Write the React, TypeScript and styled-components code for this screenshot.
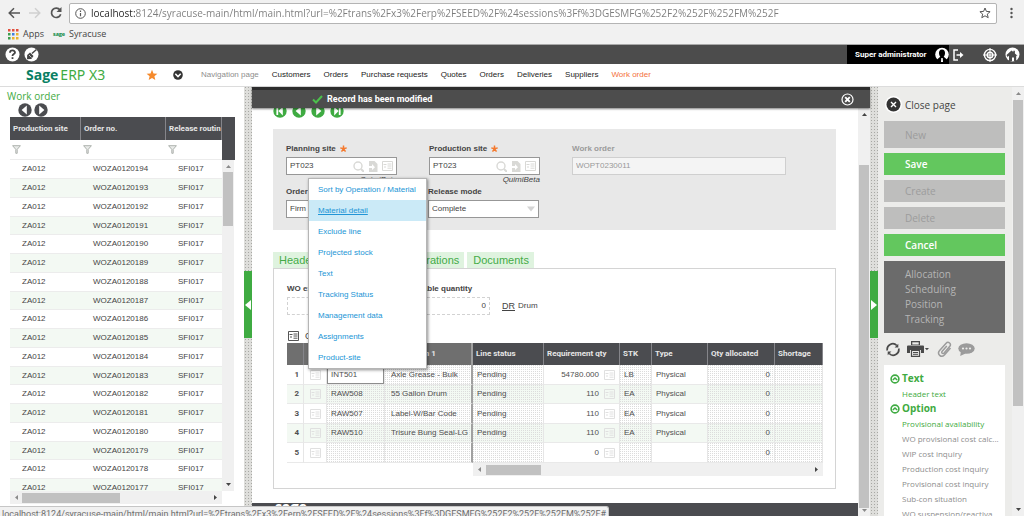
import React from 'react';
import styled, { createGlobalStyle, css } from 'styled-components';

const arial = '"Liberation Sans", Arial, sans-serif';
const segoe = '"Open Sans", "Noto Sans", sans-serif';
const green = '#3fab42';
const slate = '#4b4c50';

const Global = createGlobalStyle`
  *, *::before, *::after { box-sizing: border-box; }
  body { margin: 0; background: #fff; font: 8px/12px ${arial}; color: #444; }
  button, input, select { font: inherit; color: inherit; margin: 0; padding: 0; border: 0; background: none; border-radius: 0; }
  a { color: inherit; text-decoration: none; }
  svg { display: block; flex: none; }
  table { border-collapse: separate; border-spacing: 0; table-layout: fixed; width: 100%; }
  th, td { padding: 0; text-align: left; font-weight: normal; white-space: nowrap; overflow: hidden; }
`;

const Page = styled.div`
  position: relative;
  display: flex;
  flex-direction: column;
  height: 100vh;
  overflow: hidden;
`;

/* ---------- browser chrome ---------- */

const Browser = styled.header`
  flex: none;
  height: 45px;
  background: #f1f1f1;
  border-bottom: 1px solid #a9a9a9;
  font-family: ${segoe};
`;

const Toolbar = styled.div`
  display: flex;
  align-items: center;
  height: 24px;
  padding: 2px 8px 0;
`;

const ToolButton = styled.button`
  width: 12px;
  height: 12px;
  margin-right: 9px;
`;

const Address = styled.label`
  display: flex;
  flex: 1;
  align-items: center;
  height: 21px;
  margin: 0 11px 0 -2px;
  padding: 0 5px;
  background: #fff;
  border: 1px solid #b4b4b4;
  border-radius: 2px;
`;

const AddressInput = styled.input`
  flex: 1;
  min-width: 0;
  margin-left: 5px;
  font-size: 10px;
  line-height: 16px;
  outline: 0;
  background: linear-gradient(90deg, #222 44px, #7c7c7c 44px);
  background-clip: text;
  -webkit-background-clip: text;
  -webkit-text-fill-color: transparent;
`;

const Bookmarks = styled.nav`
  display: flex;
  align-items: center;
  height: 20px;
  padding-left: 8px;
  font-size: 9px;
  a { display: flex; align-items: center; gap: 4px; margin-right: 9px; }
`;

const MiniSage = styled.b`
  font: 900 6px/8px Lato, sans-serif;
  color: #0b8a45;
`;

const StatusBubble = styled.div`
  position: absolute;
  left: 0;
  bottom: 0;
  height: 10px;
  overflow: hidden;
  padding: 0 2px;
  background: #f1f1f1;
  border: 1px solid #c6c6c6;
  border-left: 0;
  border-bottom: 0;
  border-top-right-radius: 3px;
  font: 9px/14px Roboto, sans-serif;
  color: #6d6d6d;
  white-space: nowrap;
`;

/* ---------- application header ---------- */

const TopBar = styled.div`
  display: flex;
  flex: none;
  align-items: center;
  height: 19px;
  padding: 0 4px 0 5px;
  background: #4c4c4c;
  gap: 4px;
`;

const User = styled.div`
  display: flex;
  align-items: center;
  justify-content: space-between;
  width: 102px;
  height: 19px;
  margin-left: auto;
  padding-left: 8px;
  background: #000;
  color: #fff;
  font: bold 8px/12px Roboto, sans-serif;
`;

const TopIcons = styled.div`
  display: flex;
  align-items: center;
  gap: 8px;
  button:first-child { margin-right: 11px; }
`;

const NavBar = styled.nav`
  display: flex;
  flex: none;
  align-items: center;
  height: 23px;
  padding-left: 26px;
  border-bottom: 1px solid #dcdcdc;
`;

const Brand = styled.div`
  display: flex;
  align-items: baseline;
  gap: 2px;
  width: 120px;
  font: 14px/20px ${segoe};
  color: ${green};
  white-space: nowrap;
  b { color: #0a7f63; }
  span { font-family: "Noto Sans", sans-serif; }
`;

const NavIcons = styled.div`
  display: flex;
  align-items: center;
  gap: 15px;
  width: 55px;
`;

const NavLink = styled.a<{ $tone?: string }>`
  margin-right: 13px;
  color: ${p => p.$tone || '#222'};
`;

/* ---------- workspace ---------- */

const Workspace = styled.div`
  display: flex;
  flex: 1;
  min-height: 0;
`;

const Splitter = styled.div`
  display: flex;
  flex-direction: column;
  width: 8px;
  padding-top: 184px;
  background: conic-gradient(at 1px 1px, transparent 75%, #a8a8a4 0) 1px 0 / 3px 3px #dededb;
`;

const Handle = styled.button`
  display: flex;
  align-items: center;
  justify-content: center;
  height: 67px;
  background: ${green};
`;

const LeftPanel = styled.aside`
  display: flex;
  flex-direction: column;
  width: 244px;
  padding: 2px 9px 12px 7px;
`;

const PanelTitle = styled.h1`
  margin: 0;
  font: 10px/14px ${segoe};
  color: ${green};
`;

const Arrows = styled.div<{ $gap: number; $left: number }>`
  display: flex;
  height: 14px;
  gap: ${p => p.$gap}px;
  padding-left: ${p => p.$left}px;
`;

const OrderGrid = styled.div`
  display: grid;
  grid-template: 43px 1fr 13px / 1fr 13px;
  flex: 1;
  min-height: 0;
  margin-left: 3px;
`;

const Clip = styled.div`
  grid-row: span 2;
  min-height: 0;
  overflow: hidden;
`;

const headCell = css`
  font: bold 8px/12px Roboto, sans-serif;
  color: #e6e6e6;
  background: ${slate};
  border-right: 1px solid #85858a;
`;

const OrderTable = styled.table`
  th { ${headCell} height: 23px; padding-left: 3px; }
  thead td { height: 20px; padding-left: 2px; border-bottom: 1px solid #ececec; }
  tbody td { height: 19px; padding-left: 12px; border-bottom: 1px solid #ececec; }
  tbody tr:nth-child(4n) td { height: 18px; }
  tbody tr:nth-child(even) td { background: #f3f9f3; }
`;

const DarkCorner = styled.div`
  background: ${slate};
`;

const Bar = styled.div<{ $horizontal?: boolean; $top?: number }>`
  display: flex;
  flex: none;
  flex-direction: ${p => (p.$horizontal ? 'row' : 'column')};
  align-items: center;
  justify-content: space-between;
  ${p => (p.$horizontal ? 'height: 13px; padding: 0 4px;' : 'width: 12px; padding: 4px 0;')}
  margin-top: ${p => p.$top || 0}px;
  min-height: 0;
  background: #f0f0f0;
`;

const Thumb = styled.div<{ $before: number; $size: number; $horizontal?: boolean }>`
  flex: none;
  background: #c1c1c1;
  ${p => p.$horizontal
    ? `width: ${p.$size}px; height: 10px; margin: 0 auto 0 ${p.$before}px;`
    : `width: 10px; height: ${p.$size}px; margin: ${p.$before}px 0 auto;`}
`;

/* ---------- main column ---------- */

const Main = styled.main`
  position: relative;
  display: flex;
  flex: 1;
  min-width: 0;
`;

const Toast = styled.div`
  position: absolute;
  inset: 0 0 auto;
  display: flex;
  align-items: center;
  height: 21px;
  padding: 0 16px 0 60px;
  gap: 4px;
  background: #4d4d4d;
  border-top: 3px solid #2d2d2d;
  box-shadow: 0 1px 2px rgba(0, 0, 0, .5);
  color: #fff;
  font: bold 9px/12px Roboto, sans-serif;
  button { margin-left: auto; }
`;

const Content = styled.div`
  display: flex;
  flex: 1;
  flex-direction: column;
  min-width: 0;
  padding-top: 17px;
  overflow: hidden;
`;

const HeaderCard = styled.section`
  margin: 11px 22px 0 21px;
  padding: 14px 50px 12px 13px;
  background: #e8e8e8;
`;

const FieldRow = styled.div<{ $gap: number }>`
  display: flex;
  align-items: flex-start;
  gap: ${p => p.$gap}px;
  & + & { margin-top: 2px; }
`;

const Field = styled.div<{ $width?: number }>`
  display: flex;
  flex-direction: column;
  ${p => (p.$width ? `width: ${p.$width}px;` : 'flex: 1;')}
`;

const Label = styled.label<{ $muted?: boolean }>`
  display: flex;
  align-items: center;
  gap: 4px;
  margin-bottom: 2px;
  font-weight: bold;
  line-height: 12px;
  white-space: nowrap;
  color: ${p => (p.$muted ? '#9b9b9b' : '#444')};
`;

const Box = styled.div<{ $muted?: boolean; $dashed?: boolean }>`
  display: flex;
  align-items: center;
  height: 18px;
  padding: 0 3px;
  gap: 4px;
  border: 1px ${p => (p.$dashed ? 'dashed #d2d2d2' : p.$muted ? 'solid #cfcfcf' : 'solid #979797')};
  background: ${p => (p.$muted ? '#f4f4f4' : '#fff')};
  color: ${p => (p.$muted ? '#999' : '#444')};
  input, select { flex: 1; min-width: 0; width: 100%; appearance: none; outline: 0; }
  input { text-align: ${p => (p.$dashed ? 'right' : 'left')}; }
`;

const Note = styled.i`
  height: 9px;
  line-height: 9px;
  text-align: right;
`;

const Tabs = styled.div`
  display: flex;
  gap: 3px;
  margin: 22px 22px 0 21px;
`;

const Tab = styled.button`
  height: 16px;
  padding: 0 5px 0 6px;
  background: #dff3df;
  color: #44ab47;
  font-size: 11px;
  line-height: 16px;
`;

const TabBody = styled.section`
  margin: 0 22px 0 21px;
  padding: 14px 12px 12px 13px;
  border: 1px solid #d4d4d4;
`;

const Unit = styled.div`
  display: flex;
  gap: 3px;
  align-self: flex-end;
  margin-left: -12px;
  line-height: 18px;
  a { font-size: 9px; text-decoration: underline; }
`;

const GridTitle = styled.div`
  display: flex;
  align-items: center;
  gap: 6px;
  height: 12px;
  margin: 15px 0 1px 1px;
  font-size: 9px;
`;

const LineTable = styled.table`
  th { ${headCell} height: 22px; padding-left: 3px; }
  th:nth-child(-n + 4) { background: #6f6f6f; }
  td { height: 20px; border-right: 1px solid #e6e6e6; border-bottom: 1px solid #e9e9e9; padding: 0 4px; color: #505050; }
  td:nth-child(2) { padding-left: 6px; }
  td:nth-child(4) { padding: 0 0 0 6px; }
  tbody tr:nth-child(even) td { height: 19px; background-color: #f3f9f3; }
  td:nth-child(4), th:nth-child(4) { border-right: 2px solid #a0a0a0; }
`;

const Cell = styled.td<{ $dots?: boolean; $right?: boolean; $focus?: boolean; $strong?: boolean }>`
  ${p => p.$dots && 'background-image: conic-gradient(at 1px 1px, transparent 75%, #dcdcdc 0); background-size: 2px 2px;'}
  ${p => p.$right && 'text-align: right;'}
  ${p => p.$strong && 'font: bold 8px/12px Roboto, sans-serif; text-align: right;'}
  ${p => p.$focus && 'background: #fff; box-shadow: inset 0 0 0 1px #8d8d8d;'}
`;

const Qty = styled.span`
  display: flex;
  align-items: center;
  justify-content: flex-end;
  gap: 5px;
`;

const LineScroll = styled.div`
  padding-left: 186px;
`;

const Footer = styled.footer`
  flex: 1;
  margin-top: 14px;
  padding-left: 23px;
  overflow: hidden;
  background: ${slate};
  color: #fff;
  font: 900 16px/7px Lato, sans-serif;
`;

const Menu = styled.ul`
  position: absolute;
  left: 56px;
  top: 91px;
  width: 119px;
  margin: 0;
  padding: 0;
  list-style: none;
  background: #fff;
  border: 1px solid #b5b5b5;
  box-shadow: 1px 1px 3px rgba(0, 0, 0, .45);
`;

const MenuItem = styled.a<{ $active?: boolean }>`
  display: block;
  height: 21px;
  padding-left: 9px;
  line-height: 21px;
  color: #2295d6;
  white-space: nowrap;
  ${p => p.$active && 'background: #cbeaf7; text-decoration: underline;'}
`;

/* ---------- right column ---------- */

const Side = styled.aside`
  display: flex;
  width: 146px;
  background: #ececea;
  overflow: hidden;
`;

const SideBody = styled.div`
  display: flex;
  flex: 1;
  flex-direction: column;
  padding: 8px 7px 0 6px;
  font-family: ${segoe};
`;

const ClosePage = styled.button`
  display: flex;
  align-items: center;
  gap: 3px;
  height: 19px;
  margin: 0 0 7px 1px;
  font-size: 10px;
`;

const Action = styled.button<{ $on?: boolean; $tall?: boolean }>`
  flex: none;
  height: ${p => (p.$tall ? 27 : 22)}px;
  margin-bottom: 5px;
  padding-left: 21px;
  text-align: left;
  font-size: 10px;
  font-weight: ${p => (p.$on ? 600 : 400)};
  background: ${p => (p.$on ? '#63c75e' : '#bebebd')};
  color: ${p => (p.$on ? '#fff' : '#9c9c9c')};
`;

const ActionGroup = styled.div`
  display: flex;
  flex: none;
  flex-direction: column;
  padding: 6px 0 6px 21px;
  background: #6b6b6b;
  color: #b5b5b5;
  font-size: 10px;
  line-height: 15px;
`;

const Tools = styled.div`
  display: flex;
  flex: none;
  align-items: center;
  height: 32px;
  padding-left: 1px;
  gap: 6px;
  button:nth-child(3) { margin-left: 2px; }
`;

const Options = styled.div`
  flex: 1;
  padding-top: 6px;
  background: #fff;
  overflow: hidden;
`;

const Group = styled.h2`
  display: flex;
  align-items: center;
  gap: 2px;
  height: 15px;
  margin: 0;
  padding-left: 6px;
  font-size: 10px;
  line-height: 15px;
  font-weight: bold;
  color: ${green};
`;

const OptionLink = styled.a<{ $on?: boolean }>`
  display: block;
  height: 15px;
  padding-left: 18px;
  font-size: 8px;
  line-height: 15px;
  color: ${p => (p.$on ? green : '#8d8d8d')};
  white-space: nowrap;
`;

/* ---------- drawings ---------- */

type Dir = 'up' | 'down' | 'left' | 'right';
const turns: Record<Dir, number> = { up: 0, right: 90, down: 180, left: 270 };

const Tri = ({ dir, color = '#444', size = 5 }: { dir: Dir; color?: string; size?: number }) => (
  <svg width={size} height={size} viewBox="0 0 6 6">
    <path d="M0 4.8 3 1.2 6 4.8z" fill={color} transform={`rotate(${turns[dir]} 3 3)`} />
  </svg>
);

const CircleArrow = ({ dir, color, end }: { dir: 'left' | 'right'; color: string; end?: boolean }) => (
  <svg width="14" height="14" viewBox="0 0 14 14">
    <circle cx="7" cy="7" r="6.7" fill={color} />
    <g transform={dir === 'right' ? 'rotate(180 7 7)' : undefined} fill="#fff">
      <path d={end ? 'M9.8 2.6v8.8L5.4 7z' : 'M8.8 2.4v9.2L3.6 7z'} />
      {end && <path d="M3.4 3h1.8v8H3.4z" />}
    </g>
  </svg>
);

const ListIcon = ({ color }: { color: string }) => (
  <svg width="11" height="10" viewBox="0 0 11 10" fill="none" stroke={color}>
    <path d="M.5.5h10v9H.5z" />
    <path d="M1.5 3.5h3M2 6h2M5.5 3h4M5.5 5h4M5.5 7.2h4" />
  </svg>
);

const Funnel = () => (
  <svg width="9" height="9" viewBox="0 0 9 9">
    <path d="M.6.7h7.8L5.2 4.4V8.3H3.8V4.4z" fill="#e9ebe9" stroke="#aeb3ae" strokeWidth="1" />
  </svg>
);

const Lookup = () => (
  <>
    <svg width="11" height="11" viewBox="0 0 11 11" fill="none" stroke="#d9d9d6" strokeWidth="1.4">
      <circle cx="5" cy="5" r="4" /><path d="m8 8 3 3" strokeWidth="2" />
    </svg>
    <svg width="10" height="11" viewBox="0 0 10 11">
      <path d="M1 0h5.5L9.5 3v8H1z" fill="#d9d9d6" /><path d="M0 5h4V3l3 3.2L4 9V7H0z" fill="#fff" />
    </svg>
    <ListIcon color="#d9d9d6" />
  </>
);

const StarMark = () => (
  <svg width="7" height="8" viewBox="0 0 7 8" stroke="#f47a2f" strokeWidth="1.5">
    <path d="M3.5.5v3.3M.3 2.9l3.200.9M6.700 2.900l-3.200.9M1.500 6.600l2-2.800M5.500 6.600l-2-2.800" />
  </svg>
);

const CloseCircle = () => (
  <svg width="13" height="13" viewBox="0 0 13 13" fill="none" stroke="#fff">
    <circle cx="6.5" cy="6.5" r="5.5" strokeWidth="1.2" /><path d="m4.2 4.2 4.6 4.6m0-4.6L4.2 8.8" strokeWidth="1.9" />
  </svg>
);

const UpCircle = () => (
  <svg width="10" height="10" viewBox="0 0 10 10" fill="none" stroke={green}>
    <circle cx="5" cy="5" r="3.9" strokeWidth="1.6" /><path d="m2.8 6 2.2-2 2.2 2" strokeWidth="1.6" />
  </svg>
);

/* ---------- data ---------- */

const url = 'localhost:8124/syracuse-main/html/main.html?url=%2Ftrans%2Fx3%2Ferp%2FSEED%2F%24sessions%3Ff%3DGESMFG%252F2%252F%252FM%252F';
const orders = Array.from({ length: 18 }, (_, i) => `WOZA0120${194 - i}`);
const navLinks = ['Customers', 'Orders', 'Purchase requests', 'Quotes', 'Orders', 'Deliveries', 'Suppliers'];
const menu = ['Sort by Operation / Material', 'Material detail', 'Exclude line', 'Projected stock', 'Text', 'Tracking Status', 'Management data', 'Assignments', 'Product-site'];
const lines = [
  ['INT501', 'Axle Grease - Bulk', 'Pending', '54780.000', 'LB', 'Physical'],
  ['RAW508', '55 Gallon Drum', 'Pending', '110', 'EA', 'Physical'],
  ['RAW507', 'Label-W/Bar Code', 'Pending', '110', 'EA', 'Physical'],
  ['RAW510', 'Trisure Bung Seal-LG', 'Pending', '110', 'EA', 'Physical'],
  ['', '', '', '0', '', ''],
];
const options = ['WO provisional cost calc...', 'WIP cost inquiry', 'Production cost inquiry', 'Provisional cost inquiry', 'Sub-con situation', 'WO suspension/reactiva...'];
const appColors = ['#e2503f', '#e2503f', '#e2503f', '#3c9f4e', '#3f7fe0', '#e8b32e', '#3c9f4e', '#e8b32e', '#e8b32e'];

/* ---------- sections ---------- */

const Chrome = () => (
  <Browser>
    <Toolbar>
      <ToolButton aria-label="Back"><svg width="12" height="12" viewBox="0 0 12 12" fill="none" stroke="#555" strokeWidth="1.5"><path d="M12 6H1.5M6 1.2 1.2 6 6 10.8" /></svg></ToolButton>
      <ToolButton aria-label="Forward"><svg width="12" height="12" viewBox="0 0 12 12" fill="none" stroke="#cfcfcf" strokeWidth="1.5"><path d="M0 6h10.5M6 1.2 10.8 6 6 10.8" /></svg></ToolButton>
      <ToolButton aria-label="Reload"><svg width="12" height="12" viewBox="0 0 12 12" fill="none" stroke="#555" strokeWidth="1.7"><path d="M10 3A4.7 4.7 0 1 0 10.7 7.2" /><path d="M11.5 0v5h-5z" fill="#555" stroke="none" /></svg></ToolButton>
      <Address>
        <svg width="11" height="11" viewBox="0 0 11 11" fill="none" stroke="#555"><circle cx="5.5" cy="5.5" r="4.8" /><path d="M5.5 5v3.2M5.5 2.6v1.3" strokeWidth="1.2" /></svg>
        <AddressInput aria-label="Address" readOnly value={url} />
        <svg width="12" height="12" viewBox="0 0 12 12" fill="none" stroke="#555"><path d="m6 1 1.4 3.4 3.7.3-2.8 2.4.9 3.6L6 8.8l-3.2 1.9.9-3.6L.9 4.7l3.7-.3z" /></svg>
      </Address>
      <svg width="8" height="12" viewBox="0 0 8 12" fill="#555"><circle cx="3.5" cy="2" r="1.2" /><circle cx="3.5" cy="6" r="1.2" /><circle cx="3.5" cy="10" r="1.2" /></svg>
    </Toolbar>
    <Bookmarks>
      <a href="#apps">
        <svg width="11" height="11" viewBox="0 0 11 11">{appColors.map((c, i) => <rect key={i} x={(i % 3) * 4} y={Math.floor(i / 3) * 4} width="2.5" height="2.5" fill={c} />)}</svg>
        Apps
      </a>
      <a href="#syracuse"><MiniSage>sage</MiniSage>Syracuse</a>
    </Bookmarks>
  </Browser>
);

const AppHeader = () => (
  <>
    <TopBar>
      <button aria-label="Help">
        <svg width="15" height="15" viewBox="0 0 15 15" fill="none"><circle cx="7.5" cy="7.5" r="7" fill="#fff" /><path d="M5 5.7C5 2.7 10 2.8 10 5.5 10 7.2 7.5 7 7.5 9" stroke="#444" strokeWidth="1.8" /><path d="M6.6 10.2h1.8V12H6.6z" fill="#444" /></svg>
      </button>
      <button aria-label="Theme">
        <svg width="15" height="15" viewBox="0 0 15 15"><circle cx="7.5" cy="7.5" r="7" fill="#fff" /><path d="m12.5 2.5-4.6 4" stroke="#444" strokeWidth="1.5" /><path d="M6 5.5 9.5 9 7.3 12 3 12.2 3.2 8z" fill="#444" /><path d="m5 8 2.5 2.5" stroke="#fff" strokeWidth=".7" /></svg>
      </button>
      <User>
        Super administrator
        <svg width="14" height="15" viewBox="0 0 14 15"><circle cx="7" cy="7.5" r="6.8" fill="#fff" /><path d="M7 2.5c2.3 0 3.2 1.8 3 4-.1 1.6-.8 2.6-1.3 3.2L12 12.5V15H2v-2.5l3.3-2.8C4.8 9.1 4.1 8.1 4 6.5c-.2-2.2.7-4 3-4z" fill="#000" /><path d="M6.3 11h1.4l.3 4H6z" fill="#fff" /></svg>
      </User>
      <TopIcons>
        <button aria-label="Log out"><svg width="11" height="12" viewBox="0 0 11 12" fill="none" stroke="#fff" strokeWidth="1.5"><path d="M5 1H1v10h4M3.5 6H8" /><path d="M7 3v6l3.5-3z" fill="#fff" stroke="none" /></svg></button>
        <button aria-label="Locale"><svg width="14" height="14" viewBox="0 0 14 14" fill="none" stroke="#fff" strokeWidth="1.4"><circle cx="7" cy="7" r="5.6" /><circle cx="7" cy="7" r="2.8" /><path d="M7 0v14M0 7h14" strokeWidth="1.1" /></svg></button>
        <button aria-label="Home"><svg width="15" height="15" viewBox="0 0 15 15"><circle cx="7.5" cy="7.5" r="7" fill="#fff" /><path d="m1.5 8 5-4.5L8.3 5V3.8h1.6v2.6l2.6 2.3h-1.3V14H9v-3.5H7V14H4V8.8L2.5 10z" fill="#4c4c4c" /></svg></button>
      </TopIcons>
    </TopBar>
    <NavBar>
      <Brand><b>Sage</b><span>ERP X3</span></Brand>
      <NavIcons>
        <svg width="12" height="12" viewBox="0 0 12 12"><path d="m6 .8 1.5 3.6 3.9.3-3 2.5.9 3.8L6 9l-3.3 2 .9-3.8-3-2.5 3.9-.3z" fill="#f58a2c" /></svg>
        <svg width="10" height="10" viewBox="0 0 10 10"><circle cx="5" cy="5" r="4.8" fill="#333" /><path d="M2.3 3.8 5 6.5l2.7-2.7" stroke="#fff" strokeWidth="1.6" fill="none" /></svg>
      </NavIcons>
      <NavLink href="#nav" $tone="#8e8e8e">Navigation page</NavLink>
      {navLinks.map((t, i) => <NavLink key={i} href={`#${i}`}>{t}</NavLink>)}
      <NavLink href="#wo" $tone="#f4703c">Work order</NavLink>
    </NavBar>
  </>
);

const Orders = () => (
  <LeftPanel>
    <PanelTitle>Work order</PanelTitle>
    <Arrows $gap={2} $left={11}>
      <CircleArrow dir="left" color={slate} />
      <CircleArrow dir="right" color={slate} />
    </Arrows>
    <OrderGrid>
      <Clip>
        <OrderTable>
          <colgroup><col width="71" /><col width="85" /><col /></colgroup>
          <thead>
            <tr><th>Production site</th><th>Order no.</th><th>Release routin</th></tr>
            <tr><td><Funnel /></td><td><Funnel /></td><td><Funnel /></td></tr>
          </thead>
          <tbody>
            {orders.map(o => <tr key={o}><td>ZA012</td><td>{o}</td><td>SFI017</td></tr>)}
          </tbody>
        </OrderTable>
      </Clip>
      <DarkCorner />
      <Bar>
        <Tri dir="up" color="#8a8a8a" />
        <Thumb $before={3} $size={54} />
        <Tri dir="down" />
      </Bar>
      <Bar $horizontal>
        <Tri dir="left" color="#8a8a8a" />
        <Thumb $horizontal $before={3} $size={98} />
        <Tri dir="right" />
      </Bar>
    </OrderGrid>
  </LeftPanel>
);

const LookupField = ({ id, label }: { id: string; label: string }) => (
  <Field $width={111}>
    <Label htmlFor={id}>{label} <StarMark /></Label>
    <Box><input id={id} defaultValue="PT023" /><Lookup /></Box>
    <Note>QuimiBeta</Note>
  </Field>
);

const SelectField = ({ id, label, value }: { id: string; label: string; value: string }) => (
  <Field $width={111}>
    <Label htmlFor={id}>{label}</Label>
    <Box>
      <select id={id} defaultValue={value}><option>{value}</option></select>
      <Tri dir="down" color="#d4d4d4" size={8} />
    </Box>
  </Field>
);

const WorkOrder = () => (
  <Main>
    <Content>
      <Arrows $gap={5} $left={21}>
        <CircleArrow dir="left" color={green} end />
        <CircleArrow dir="left" color={green} />
        <CircleArrow dir="right" color={green} />
        <CircleArrow dir="right" color={green} end />
      </Arrows>
      <HeaderCard>
        <FieldRow $gap={32}>
          <LookupField id="plan" label="Planning site" />
          <LookupField id="prod" label="Production site" />
          <Field>
            <Label htmlFor="wo" $muted>Work order</Label>
            <Box $muted><input id="wo" readOnly value="WOPT0230011" /></Box>
          </Field>
        </FieldRow>
        <FieldRow $gap={31}>
          <SelectField id="status" label="Order status" value="Firm" />
          <SelectField id="mode" label="Release mode" value="Complete" />
        </FieldRow>
      </HeaderCard>
      <Tabs>
        {['Header', 'Components', 'Operations', 'Documents'].map(t => <Tab key={t}>{t}</Tab>)}
      </Tabs>
      <TabBody>
        <FieldRow $gap={24}>
          <Field $width={86}>
            <Label htmlFor="exp">WO exp. quantity</Label>
            <Box $dashed><input id="exp" defaultValue="" /></Box>
          </Field>
          <Field $width={93}>
            <Label htmlFor="rel">Releasable quantity</Label>
            <Box $dashed><input id="rel" defaultValue="0" /></Box>
          </Field>
          <Unit><a href="#dr">DR</a>Drum</Unit>
        </FieldRow>
        <GridTitle><ListIcon color="#555" />Components</GridTitle>
        <LineTable>
          <colgroup>
            {[17, 23, 58, 88, 71, 76, 32, 56, 67].map((w, i) => <col key={i} width={w} />)}<col />
          </colgroup>
          <thead>
            <tr>
              <th /><th /><th>Product</th><th>Description 1</th><th>Line status</th><th>Requirement qty</th>
              <th>STK</th><th>Type</th><th>Qty allocated</th><th>Shortage</th>
            </tr>
          </thead>
          <tbody>
            {lines.map((l, i) => (
              <tr key={i}>
                <Cell $strong>{i + 1}</Cell>
                <Cell><ListIcon color="#e0e0e0" /></Cell>
                <Cell $dots={i > 0} $focus={i === 0}>{l[0]}</Cell>
                <Cell $dots>{l[1]}</Cell>
                <Cell $dots>{l[2]}</Cell>
                <Cell><Qty>{l[3]}<ListIcon color="#e0e0e0" /></Qty></Cell>
                <Cell $dots>{l[4]}</Cell>
                <Cell>{l[5]}</Cell>
                <Cell $dots $right>0</Cell>
                <Cell $dots />
              </tr>
            ))}
          </tbody>
        </LineTable>
        <LineScroll>
          <Bar $horizontal>
            <Tri dir="left" color="#8a8a8a" />
            <Thumb $horizontal $before={4} $size={55} />
            <Tri dir="right" />
          </Bar>
        </LineScroll>
      </TabBody>
      <Footer>sage</Footer>
    </Content>
    <Bar $top={21}>
      <Tri dir="up" />
      <Thumb $before={48} $size={343} />
      <Tri dir="down" color="#8a8a8a" />
    </Bar>
    <Toast role="status">
      <svg width="11" height="9" viewBox="0 0 11 9"><path d="m1 4.5 3 3L10 1" fill="none" stroke="#4cc04c" strokeWidth="2" /></svg>
      Record has been modified
      <button aria-label="Dismiss"><CloseCircle /></button>
    </Toast>
    <Menu>
      {menu.map((m, i) => <li key={m}><MenuItem href={`#m${i}`} $active={i === 1}>{m}</MenuItem></li>)}
    </Menu>
  </Main>
);

const Sidebar = () => (
  <Side>
    <SideBody>
      <ClosePage>
        <svg width="17" height="17" viewBox="0 0 17 17"><circle cx="8.5" cy="8.5" r="8.5" fill="#fff" /><circle cx="8.5" cy="8.5" r="7" fill="#333" /><path d="m6 6 5 5m0-5-5 5" stroke="#fff" strokeWidth="1.4" /></svg>
        Close page
      </ClosePage>
      <Action $tall>New</Action>
      <Action $on>Save</Action>
      <Action>Create</Action>
      <Action>Delete</Action>
      <Action $on>Cancel</Action>
      <ActionGroup>
        {['Allocation', 'Scheduling', 'Position', 'Tracking'].map(t => <a key={t} href={`#${t}`}>{t}</a>)}
      </ActionGroup>
      <Tools>
        <button aria-label="Refresh"><svg width="16" height="15" viewBox="0 0 16 15" fill="none" stroke="#4a4a4a" strokeWidth="1.7"><path d="M2.3 8.5A5.6 5.6 0 0 1 11.8 3.5M13.7 6.5A5.6 5.6 0 0 1 4.2 11.5" /><path d="M13.3 1.8v3.7H9.6zM2.7 13.2V9.5h3.7z" fill="#4a4a4a" stroke="none" /></svg></button>
        <button aria-label="Print"><svg width="22" height="16" viewBox="0 0 22 16"><path d="M4 0h9v4H4zM1 4.5h15a1 1 0 0 1 1 1V12h-3V9H3v3H0V5.5a1 1 0 0 1 1-1z" fill="#4a4a4a" /><path d="M5.3 1.3h6.4v2.2H5.3z" fill="#ececea" /><path d="M4.5 9.5h8v5.8h-8z" fill="#ececea" stroke="#4a4a4a" strokeWidth="1.2" /><path d="M6 11.5h5M6 13.3h5" stroke="#4a4a4a" /><path d="M17.8 7H22l-2.1 2.2z" fill="#4a4a4a" /></svg></button>
        <button aria-label="Attachments"><svg width="15" height="17" viewBox="0 0 15 17" fill="none" stroke="#9b9b9b" strokeWidth="1.5"><path d="M9.8 5 5.2 10.3c-1.3 1.6.6 3 1.9 1.6l5.5-6.3c2.3-2.7-1.2-5.8-3.7-3.2L2.6 9.6c-3 3.5 1.6 7.7 4.8 4.3L13.5 7" /></svg></button>
        <button aria-label="Comments"><svg width="17" height="13" viewBox="0 0 17 13"><ellipse cx="8.5" cy="5.5" rx="8.2" ry="5.3" fill="#9b9b9b" /><path d="m3 8-.8 5 5.3-2.5z" fill="#9b9b9b" /><g fill="#ececea"><circle cx="5" cy="5.5" r="1.1" /><circle cx="8.5" cy="5.5" r="1.1" /><circle cx="12" cy="5.5" r="1.1" /></g></svg></button>
      </Tools>
      <Options>
        <Group><UpCircle />Text</Group>
        <OptionLink $on href="#ht">Header text</OptionLink>
        <Group><UpCircle />Option</Group>
        <OptionLink $on href="#pa">Provisional availability</OptionLink>
        {options.map(o => <OptionLink key={o} href={`#${o}`}>{o}</OptionLink>)}
      </Options>
    </SideBody>
    <Bar>
      <Tri dir="up" color="#8a8a8a" />
      <Thumb $before={4} $size={306} />
      <Tri dir="down" />
    </Bar>
  </Side>
);

export default function App() {
  return (
    <Page>
      <Global />
      <Chrome />
      <AppHeader />
      <Workspace>
        <Orders />
        <Splitter><Handle aria-label="Collapse left panel"><Tri dir="left" color="#fff" size={10} /></Handle></Splitter>
        <WorkOrder />
        <Splitter><Handle aria-label="Collapse right panel"><Tri dir="right" color="#fff" size={10} /></Handle></Splitter>
        <Sidebar />
      </Workspace>
      <StatusBubble>{url}#</StatusBubble>
    </Page>
  );
}
